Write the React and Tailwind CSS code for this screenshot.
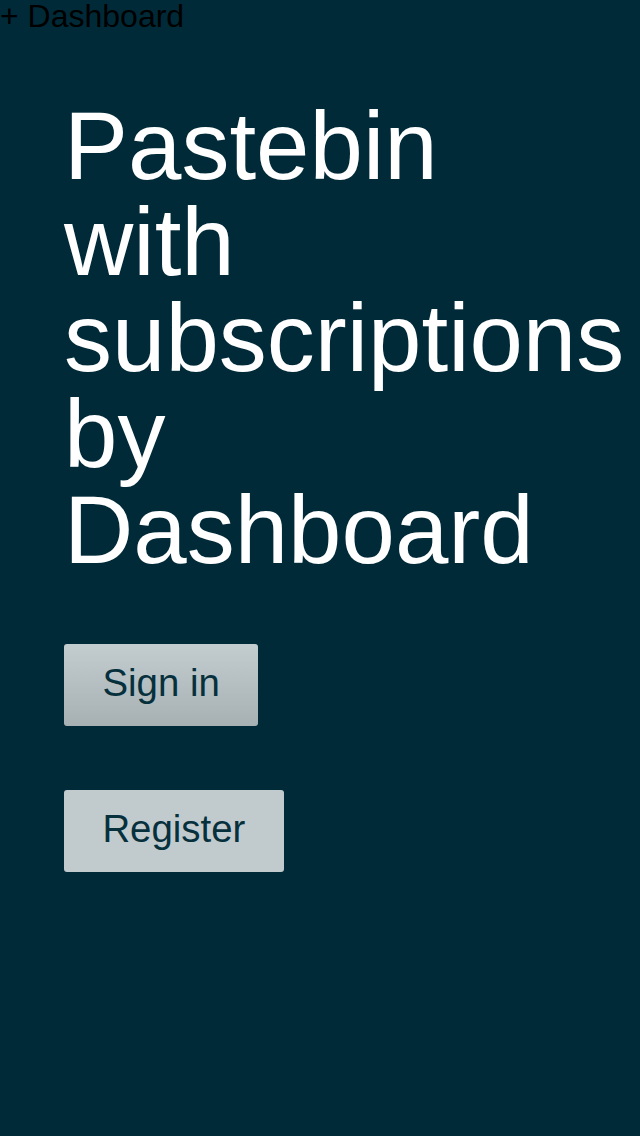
import React from 'react';

const btn =
  'block rounded-[3px] px-[38.4px] pt-[17px] pb-[21px] text-[38.4px] leading-[44px] text-[#07303d]';

export default function App() {
  return (
    <div className="relative min-h-[1136px] bg-[#012a38] font-['Liberation_Sans',Arial,sans-serif]">
      <div className="absolute left-0 top-0 text-[32px] leading-none text-black">+ Dashboard</div>
      <div className="px-16 pt-[98px]">
        <h1 className="text-[96px] leading-[96px] text-white">
          Pastebin with subscriptions by Dashboard
        </h1>
        <div className="mt-[66px] flex flex-col items-start gap-16">
          <button className={`${btn} bg-gradient-to-b from-[#c3cdcf] to-[#a7b1b4]`}>Sign in</button>
          <button className={`${btn} bg-[#c1cbcd]`}>Register</button>
        </div>
      </div>
    </div>
  );
}
